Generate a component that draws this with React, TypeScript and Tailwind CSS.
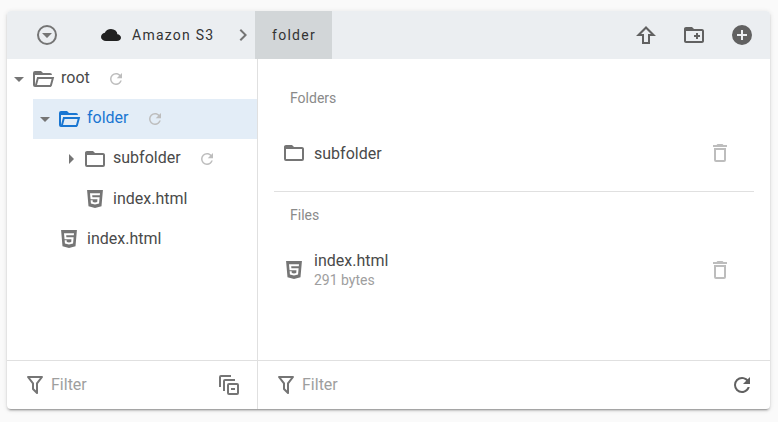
const P = {
  down: "M7,10L12,15L17,10H7Z",
  right: "M10,17L15,12L10,7V17Z",
  open: "M6.1,10L4,18V8H21A2,2 0 0,0 19,6H12L10,4H4A2,2 0 0,0 2,6V18A2,2 0 0,0 4,20H19C19.9,20 20.7,19.4 20.9,18.5L23.2,10H6.1M19,18H6L7.6,12H20.6L19,18Z",
  folder: "M20,18H4V8H20M20,6H12L10,4H4C2.89,4 2,4.89 2,6V18A2,2 0 0,0 4,20H20A2,2 0 0,0 22,18V8C22,6.89 21.1,6 20,6Z",
  html: "M12,17.56L16.07,16.43L16.62,10.33H9.38L9.2,8.3H16.8L17,6.31H7L7.56,12.32H14.45L14.22,14.9L12,15.5L9.78,14.9L9.64,13.24H7.64L7.93,16.43L12,17.56M4.07,3H19.93L18.5,19.2L12,21L5.5,19.2L4.07,3Z",
  refresh: "M17.65,6.35C16.2,4.9 14.21,4 12,4A8,8 0 0,0 4,12A8,8 0 0,0 12,20C15.73,20 18.84,17.45 19.73,14H17.65C16.83,16.33 14.61,18 12,18A6,6 0 0,1 6,12A6,6 0 0,1 12,6C13.66,6 15.14,6.69 16.22,7.78L13,11H20V4L17.65,6.35Z",
  filter: "M15,19.88C15.04,20.18 14.94,20.5 14.71,20.71C14.32,21.1 13.69,21.1 13.3,20.71L9.29,16.7C9.06,16.47 8.96,16.16 9,15.87V10.75L4.21,4.62C3.87,4.19 3.95,3.56 4.38,3.22C4.57,3.08 4.78,3 5,3V3H19V3C19.22,3 19.43,3.08 19.62,3.22C20.05,3.56 20.13,4.19 19.79,4.62L15,10.75V19.88M7.04,5L11,10.06V15.58L13,17.58V10.05L16.96,5H7.04Z",
  collapse: "M14,4H4V14H2V4A2,2 0 0 1 4,2H14V4M18,6H8A2,2 0 0 0 6,8V18H8V8H18V6M20,10H12A2,2 0 0 0 10,12V20A2,2 0 0 0 12,22H20A2,2 0 0 0 22,20V12A2,2 0 0 0 20,10M20,20H12V12H20V20M14,15H18V17H14V15Z",
  up: "M16,13V21H8V13H2L12,3L22,13H16M7,11H10V19H14V11H17L12,6L7,11Z",
  folderPlus: "M12 12H14V10H16V12H18V14H16V16H14V14H12V12M22 8V18C22 19.11 21.11 20 20 20H4C2.89 20 2 19.11 2 18V6C2 4.89 2.89 4 4 4H10L12 6H20C21.11 6 22 6.89 22 8M20 8H4V18H20V8Z",
  plus: "M17,13H13V17H11V13H7V11H11V7H13V11H17M12,2A10,10 0 0,0 2,12A10,10 0 0,0 12,22A10,10 0 0,0 22,12A10,10 0 0,0 12,2Z",
  trash: "M6,19A2,2 0 0,0 8,21H16A2,2 0 0,0 18,19V7H6V19M8,9H16V19H8V9M15.5,4L14.5,3H9.5L8.5,4H5V6H19V4H15.5Z",
  cloud: "M6.5,20Q4.22,20 2.61,18.43 1,16.85 1,14.58 1,12.63 2.17,11.1 3.35,9.57 5.25,9.15 5.88,6.85 7.75,5.43 9.63,4 12,4 14.93,4 16.96,6.04 19,8.07 19,11 20.73,11.2 21.86,12.5 23,13.78 23,15.5 23,17.38 21.69,18.69 20.38,20 18.5,20Z",
  dropCircle: "M12,20A8,8 0 0,1 4,12A8,8 0 0,1 12,4A8,8 0 0,1 20,12A8,8 0 0,1 12,20M12,2A10,10 0 0,0 2,12A10,10 0 0,0 12,22A10,10 0 0,0 22,12A10,10 0 0,0 12,2M7,10L12,15L17,10H7Z",
  chevron: "M8.59,16.58L13.17,12L8.59,7.41L10,6L16,12L10,18L8.59,16.58Z",
};

function Icon({ d, className = "" }: { d: string; className?: string }) {
  return (
    <svg viewBox="0 0 24 24" className={"w-6 h-6 shrink-0 fill-current " + className}>
      <path d={d} />
    </svg>
  );
}

function TreeRow({
  pad, caret, icon, label, refresh, active, labelClass,
}: {
  pad: string; caret?: string; icon: string; label: string; refresh?: string; active?: boolean; labelClass: string;
}) {
  return (
    <div className={"h-10 flex items-center " + pad + (active ? " bg-[#e3edf7] text-[#1976d2]" : " text-[#4a4a4a]")}>
      {caret && <Icon d={caret} className="text-[#757575]" />}
      <Icon d={icon} className={active ? "text-[#1976d2]" : "text-[#757575]"} />
      <span className={"text-base ml-[6px] " + labelClass}>{label}</span>
      {refresh && <Icon d={P.refresh} className={refresh + " w-[18px] h-[18px] text-[#bdbdbd]"} />}
    </div>
  );
}

function Footer({ filterPad, icon, iconClass, className = "" }: { filterPad: string; icon: string; iconClass: string; className?: string }) {
  return (
    <div className={"h-[49px] border-t border-[#e0e0e0] flex items-center justify-between " + filterPad + " " + className}>
      <div className="flex items-center">
        <Icon d={P.filter} className="text-[#757575]" />
        <span className="ml-1 text-base text-[#9e9e9e]">Filter</span>
      </div>
      <Icon d={icon} className={iconClass} />
    </div>
  );
}

export default function App() {
  return (
    <div className="w-[778px] h-[422px] bg-[#fafafa] pt-[11px] px-[7px] overflow-hidden" style={{ fontFamily: "Roboto, sans-serif" }}>
      <div className="w-[763px] h-[398px] bg-white rounded flex flex-col shadow-[0_3px_1px_-2px_rgba(0,0,0,0.2),0_2px_2px_0_rgba(0,0,0,0.14),0_1px_5px_0_rgba(0,0,0,0.12)] overflow-hidden">
        <header className="h-12 shrink-0 bg-[#ebeef1] flex items-center">
          <Icon d={P.dropCircle} className="ml-7 text-[#757575]" />
          <svg viewBox="1 4 22 16" preserveAspectRatio="none" className="ml-[42px] w-5 h-3 shrink-0 fill-current text-[#212121]">
            <path d={P.cloud} />
          </svg>
          <span className="ml-[11px] text-sm font-normal tracking-[1.25px] text-[#333]">Amazon S3</span>
          <Icon d={P.chevron} className="ml-[17px] text-[#757575]" />
          <div className="h-12 w-[77px] bg-[#d2d6d8] flex items-center justify-center text-sm font-normal tracking-[1.25px] text-[#333]">folder</div>
          <div className="ml-auto flex items-center gap-6 pr-4 text-[#616161]">
            <Icon d={P.up} />
            <Icon d={P.folderPlus} />
            <Icon d={P.plus} />
          </div>
        </header>
        <div className="flex-1 flex min-h-0">
          <aside className="w-[251px] shrink-0 border-r border-[#e0e0e0] flex flex-col">
            <div className="flex-1">
              <TreeRow pad="pl-0" caret={P.down} icon={P.open} label="root" refresh="ml-[17px]" labelClass="-mt-[2px]" />
              <div className="pl-[26px]">
                <TreeRow active pad="pl-0" caret={P.down} icon={P.open} label="folder" refresh="ml-[17px]" labelClass="-mt-[2px]" />
                <div className="pl-[26px]">
                  <TreeRow pad="pl-0" caret={P.right} icon={P.folder} label="subfolder" refresh="ml-[17px]" labelClass="-mt-[2px]" />
                  <TreeRow pad="pl-[24px]" icon={P.html} label="index.html" labelClass="" />
                </div>
                <TreeRow pad="pl-[24px]" icon={P.html} label="index.html" labelClass="" />
              </div>
            </div>
            <Footer filterPad="pl-4 pr-4" icon={P.collapse} iconClass="text-[#757575]" />
          </aside>
          <main className="flex-1 flex flex-col min-w-0">
            <div className="flex-1 px-4">
              <div className="pt-[30px] pl-4 text-sm leading-[18px] text-[#8a8a8a]">Folders</div>
              <div className="h-[24px] mt-[34px] flex items-center pl-2 pr-[22px]">
                <Icon d={P.folder} className="text-[#757575]" />
                <span className="ml-2 mt-[2px] text-base text-[#4a4a4a]">subfolder</span>
                <Icon d={P.trash} className="ml-auto text-[#bdbdbd]" />
              </div>
              <div className="h-px bg-[#e0e0e0] mt-[26px]" />
              <div className="pt-[14px] pl-4 text-sm leading-[18px] text-[#8a8a8a]">Files</div>
              <div className="mt-[27px] h-[38px] flex items-center pl-2 pr-[22px]">
                <Icon d={P.html} className="text-[#757575]" />
                <div className="ml-2 flex flex-col">
                  <span className="text-base leading-[20px] text-[#4a4a4a]">index.html</span>
                  <span className="text-sm leading-[18px] text-[#9e9e9e]">291 bytes</span>
                </div>
                <Icon d={P.trash} className="ml-auto text-[#bdbdbd]" />
              </div>
            </div>
            <Footer filterPad="pl-4 pr-4" icon={P.refresh} iconClass="text-[#616161]" />
          </main>
        </div>
      </div>
    </div>
  );
}
